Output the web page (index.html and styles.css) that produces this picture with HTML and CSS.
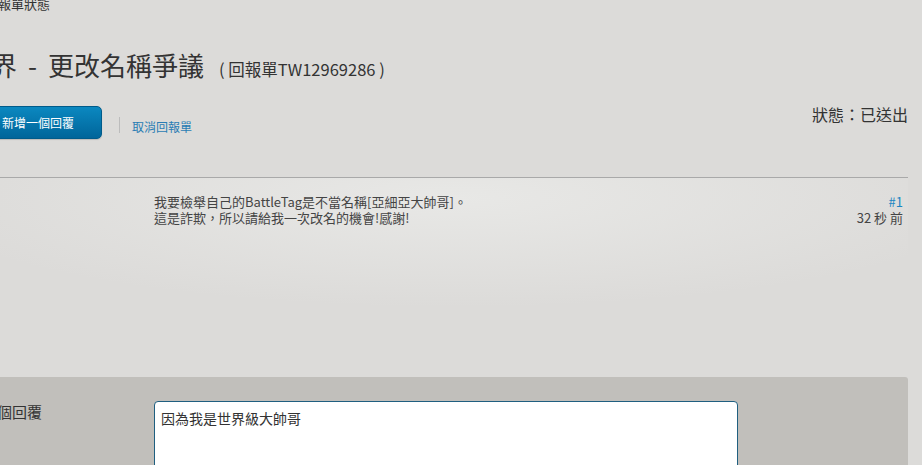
FILE: index.html
```html
<!DOCTYPE html>
<html lang="zh-Hant">
<head>
    <meta charset="UTF-8">
    <meta name="viewport" content="width=device-width, initial-scale=1.0">
    <title>回報單狀態</title>
    <link rel="stylesheet" href="styles.css">
</head>
<body>

    <div class="page">
        <div class="breadcrumb">報單狀態</div>

        <h1 class="ticket-title">界<span class="dash">-</span>更改名稱爭議<span class="ticket-id">( 回報單TW12969286 )</span></h1>

        <div class="toolbar">
            <button class="reply-btn">新增一個回覆</button>
            <span class="sep"></span>
            <a class="cancel-link" href="#">取消回報單</a>
            <div class="status">狀態：已送出</div>
        </div>

        <div class="post">
            <div class="post-author"></div>
            <div class="post-body">
                <p>我要檢舉自己的BattleTag是不當名稱[亞細亞大帥哥]。</p>
                <p>這是詐欺，所以請給我一次改名的機會!感謝!</p>
            </div>
            <div class="post-meta">
                <p><a class="post-num" href="#">#1</a></p>
                <p>32 秒 前</p>
            </div>
        </div>

        <div class="reply-panel">
            <label class="reply-label" for="reply">個回覆</label>
            <textarea id="reply" class="reply-box">因為我是世界級大帥哥</textarea>
        </div>
    </div>

</body>
</html>
```

FILE: styles.css
```css
body {
    margin: 0;
    background-color: #dcdbd9;
    font-family: "Noto Sans CJK TC", "Liberation Sans", sans-serif;
    color: #333;
    overflow: hidden;
}
.page {
    width: 908px;
}
.breadcrumb {
    font-size: 13px;
    line-height: 14px;
    margin-top: -3px;
    text-indent: -2px;
}
.ticket-title {
    font-size: 26px;
    font-weight: normal;
    line-height: 32px;
    margin: 38px 0 0;
    text-indent: -9px;
    white-space: nowrap;
}
.ticket-title .dash {
    margin: 0 11px;
}
.ticket-id {
    font-size: 16.5px;
    margin-left: 15px;
}
.toolbar {
    display: flex;
    align-items: flex-start;
    margin-top: 21px;
}
.reply-btn {
    margin-left: -30px;
    padding: 0 27px 0 31px;
    height: 33px;
    border: 1px solid #005b8a;
    border-radius: 5px;
    background: linear-gradient(#0b88c0, #00659a);
    box-shadow: 0 1px 1px rgba(0, 0, 0, 0.15);
    color: white;
    font-family: inherit;
    font-size: 12px;
    cursor: pointer;
}
.sep {
    width: 1px;
    height: 16px;
    background-color: #bcbcbc;
    margin: 11px 12px 0 17px;
}
.cancel-link {
    color: #2a7db4;
    font-size: 12px;
    line-height: 16px;
    margin-top: 13px;
    text-decoration: none;
}
.status {
    margin-left: auto;
    margin-top: -2px;
    font-size: 16px;
    line-height: 20px;
}
.post {
    display: grid;
    grid-template-columns: 154px 1fr auto;
    margin-top: 38px;
    border-top: 1px solid #a9a9a9;
    padding: 17px 5px 0 0;
    height: 182px;
    background: radial-gradient(ellipse 60% 55% at 50% 10%, #e8e8e6, rgba(232, 232, 230, 0));
}
.post p {
    margin: 0;
    height: 16px;
    line-height: 14px;
}
.post-body {
    font-size: 13px;
    color: #444;
}
.post-meta {
    text-align: right;
    font-size: 13px;
    color: #444;
}
.post-num {
    color: #1b86c2;
    text-decoration: none;
}
.reply-panel {
    display: grid;
    grid-template-columns: 154px 584px;
    align-items: start;
    background-color: #c1bfbb;
    border-radius: 0 3px 0 0;
    padding-top: 24px;
    height: 100px;
}
.reply-label {
    font-size: 15px;
    line-height: 18px;
    text-indent: -3px;
    margin-top: 2px;
}
.reply-box {
    height: 120px;
    border: 1px solid #1f5f80;
    border-radius: 4px;
    padding: 8px 6px;
    font-family: inherit;
    font-size: 14px;
    line-height: 16px;
    color: #333;
    resize: none;
}
```
